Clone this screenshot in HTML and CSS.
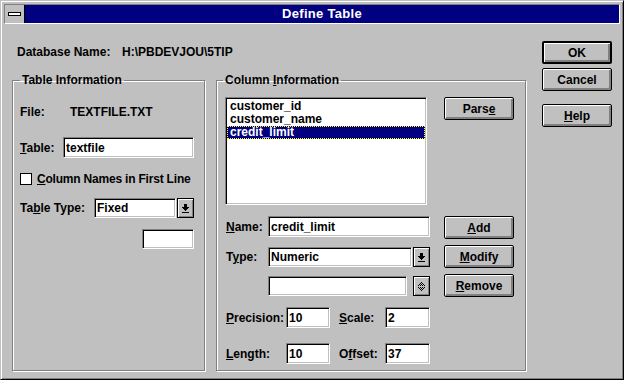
FILE: index.html
```html
<!DOCTYPE html>
<html lang="en">
<head>
    <meta charset="UTF-8">
    <meta name="viewport" content="width=device-width, initial-scale=1.0">
    <title>Define Table</title>
    <link rel="stylesheet" href="styles.css">
</head>
<body>
    <div class="window">
        <div class="caption">
            <div class="sysmenu"><span class="sysbar"></span></div>
            <div class="title">Define Table</div>
        </div>
        <div class="client">
            <div class="main">
                <div class="dbname">
                    <span class="dblabel">Database Name:</span>
                    <span>H:\PBDEVJOU\5TIP</span>
                </div>
                <div class="groups">
                    <fieldset class="group group-table">
                        <legend>Table Information</legend>
                        <div class="row row-file">
                            <span class="lbl-file">File:</span>
                            <span>TEXTFILE.TXT</span>
                        </div>
                        <div class="row row-table">
                            <span class="lbl-table"><u>T</u>able:</span>
                            <input class="edit edit-table" type="text" value="textfile">
                        </div>
                        <div class="row row-check">
                            <span class="checkbox"></span>
                            <span class="checklbl"><u>C</u>olumn Names in First Line</span>
                        </div>
                        <div class="row row-type">
                            <span class="lbl-ttype">Ta<u>b</u>le Type:</span>
                            <div class="combo combo-ttype">
                                <input class="edit" type="text" value="Fixed">
                                <div class="dropbtn">
                                    <svg width="7" height="9" viewBox="0 0 7 9" shape-rendering="crispEdges"><path d="M2 0H5V3H7V4H6V5H5V6H4V7H3V6H2V5H1V4H0V3H2Z M0 8H7V9H0Z"/></svg>
                                </div>
                            </div>
                        </div>
                        <div class="row row-blank">
                            <input class="edit edit-small" type="text" value="">
                        </div>
                    </fieldset>

                    <fieldset class="group group-col">
                        <legend>Column <u>I</u>nformation</legend>
                        <div class="colbody">
                            <div class="colfields">
                                <ul class="listbox">
                                    <li>customer_id</li>
                                    <li>customer_name</li>
                                    <li class="sel">credit_limit</li>
                                </ul>
                                <div class="frow frow-name">
                                    <span class="flbl"><u>N</u>ame:</span>
                                    <input class="edit edit-name" type="text" value="credit_limit">
                                </div>
                                <div class="frow frow-type">
                                    <span class="flbl">T<u>y</u>pe:</span>
                                    <div class="combo combo-ctype">
                                        <input class="edit" type="text" value="Numeric">
                                        <div class="dropbtn">
                                            <svg width="7" height="9" viewBox="0 0 7 9" shape-rendering="crispEdges"><path d="M2 0H5V3H7V4H6V5H5V6H4V7H3V6H2V5H1V4H0V3H2Z M0 8H7V9H0Z"/></svg>
                                        </div>
                                    </div>
                                </div>
                                <div class="frow frow-extra">
                                    <span class="flbl"></span>
                                    <input class="edit edit-extra" type="text" value="">
                                    <div class="spinbtn">
                                        <svg width="7" height="11" viewBox="0 0 7 11" shape-rendering="crispEdges">
                                            <defs>
                                                <pattern id="dots" width="2" height="2" patternUnits="userSpaceOnUse">
                                                    <rect width="1" height="1" fill="#000"/>
                                                    <rect x="1" y="1" width="1" height="1" fill="#000"/>
                                                </pattern>
                                            </defs>
                                            <path fill="url(#dots)" d="M3 0H4V1H5V2H6V3H7V5H0V3H1V2H2V1H3Z M0 6H7V8H6V9H5V10H4V11H3V10H2V9H1V8H0Z"/>
                                        </svg>
                                    </div>
                                </div>
                                <div class="frow frow-prec">
                                    <span class="plbl"><u>P</u>recision:</span>
                                    <input class="edit edit-num" type="text" value="10">
                                    <span class="slbl"><u>S</u>cale:</span>
                                    <input class="edit edit-num2" type="text" value="2">
                                </div>
                                <div class="frow frow-len">
                                    <span class="plbl"><u>L</u>ength:</span>
                                    <input class="edit edit-num" type="text" value="10">
                                    <span class="slbl">O<u>f</u>fset:</span>
                                    <input class="edit edit-num2" type="text" value="37">
                                </div>
                            </div>
                            <div class="colbtns">
                                <button class="btn">Pars<u>e</u></button>
                                <button class="btn btn-add"><u>A</u>dd</button>
                                <button class="btn btn-mod"><u>M</u>odify</button>
                                <button class="btn btn-mod"><u>R</u>emove</button>
                            </div>
                        </div>
                    </fieldset>
                </div>
            </div>
            <div class="side">
                <button class="btn btn-default">OK</button>
                <button class="btn btn-cancel">Cancel</button>
                <button class="btn btn-help"><u>H</u>elp</button>
            </div>
        </div>
    </div>
</body>
</html>
```

FILE: styles.css
```css
* {
    box-sizing: border-box;
}
body {
    margin: 0;
    font-family: "Liberation Sans", Arial, sans-serif;
    font-size: 12px;
    font-weight: bold;
    color: #000;
    background: #c0c0c0;
}
u {
    text-underline-offset: 1px;
}
.window {
    width: 624px;
    height: 380px;
    background: #c0c0c0;
    border: 1px solid;
    border-color: #c0c0c0 #000 #000 #c0c0c0;
    box-shadow: inset 1px 1px #fff, inset -1px -1px #808080;
    padding: 3px;
    display: flex;
    flex-direction: column;
}
.caption {
    display: flex;
    height: 20px;
    border: 1px solid;
    border-color: #808080 #fff #fff #808080;
}
.sysmenu {
    width: 20px;
    background: #c0c0c0;
    border-right: 1px solid #000;
    display: flex;
    align-items: center;
    justify-content: center;
}
.sysbar {
    width: 13px;
    height: 4px;
    background: #fff;
    border: 1px solid #000;
}
.title {
    flex: 1;
    background: #000080;
    color: #fff;
    text-align: center;
    font-size: 13px;
    letter-spacing: 0.3px;
    line-height: 18px;
}
.client {
    flex: 1;
    display: flex;
    padding: 17px 0 0 8px;
}
.dbname {
    display: flex;
    margin-top: 4px;
    padding-left: 5px;
    line-height: 14px;
}
.dblabel {
    width: 105px;
}
.groups {
    display: flex;
    gap: 11px;
    margin-top: 14px;
}
.group {
    margin: 0;
    min-width: 0;
    height: 298px;
    border: 1px solid #808080;
    box-shadow: inset 1px 1px #fff, 1px 1px #fff;
}
.group legend {
    padding: 0 2px;
    line-height: 15px;
}
.group-table {
    width: 193px;
    padding: 14px 10px 0 7px;
}
.row {
    display: flex;
    align-items: center;
    white-space: nowrap;
}
.row-file {
    height: 20px;
}
.lbl-file {
    width: 50px;
}
.row-table {
    height: 21px;
    margin-top: 15px;
}
.lbl-table {
    width: 43px;
}
.edit {
    margin: 0;
    padding: 0 0 0 2px;
    font: inherit;
    color: #000;
    background: #fff;
    border: 1px solid;
    border-color: #808080 #fff #fff #808080;
    box-shadow: inset 1px 1px #000, inset -1px -1px #c0c0c0;
    border-radius: 0;
    outline: none;
}
.edit-table {
    width: 131px;
    height: 21px;
}
.row-check {
    height: 20px;
    margin-top: 11px;
}
.checkbox {
    flex: none;
    width: 12px;
    height: 12px;
    margin-right: 5px;
    background: #fff;
    border: 1px solid #000;
}
.checklbl {
    letter-spacing: -0.2px;
}
.row-type {
    height: 20px;
    margin-top: 9px;
}
.lbl-ttype {
    width: 74px;
}
.combo {
    display: flex;
    gap: 1px;
    height: 20px;
}
.combo .edit {
    height: 20px;
}
.combo-ttype {
    width: 100px;
}
.combo-ttype .edit {
    width: 82px;
}
.dropbtn, .spinbtn {
    width: 17px;
    height: 20px;
    background: #c0c0c0;
    border: 1px solid #000;
    box-shadow: inset 1px 1px #fff, inset -1px -1px #808080;
    display: flex;
    align-items: center;
    justify-content: center;
}
.row-blank {
    height: 20px;
    margin-top: 11px;
    justify-content: flex-end;
}
.edit-small {
    width: 52px;
    height: 20px;
}
.group-col {
    width: 310px;
    padding: 9px 11px 0 8px;
}
.group-col legend {
    margin-left: -2px;
}
.colbody {
    display: flex;
    gap: 14px;
}
.colfields {
    width: 205px;
}
.listbox {
    width: 202px;
    height: 108px;
    margin: 0;
    padding: 2px 1px;
    list-style: none;
    background: #fff;
    border: 1px solid;
    border-color: #808080 #fff #fff #808080;
    box-shadow: inset 1px 1px #000, inset -1px -1px #c0c0c0;
}
.listbox li {
    padding-left: 3px;
    line-height: 13px;
}
.listbox .sel {
    background: #000080;
    color: #fff;
    outline: 1px dotted #ff0;
    outline-offset: -1px;
}
.frow {
    display: flex;
    align-items: center;
    white-space: nowrap;
}
.flbl {
    width: 43px;
    padding-left: 1px;
}
.frow-name {
    height: 21px;
    margin-top: 11px;
}
.edit-name {
    width: 162px;
    height: 21px;
}
.frow-type {
    height: 20px;
    margin-top: 10px;
}
.combo-ctype {
    width: 162px;
}
.combo-ctype .edit {
    width: 144px;
}
.frow-extra {
    height: 20px;
    margin-top: 9px;
}
.edit-extra {
    width: 139px;
    height: 20px;
}
.spinbtn {
    margin-left: auto;
}
.frow-prec {
    height: 21px;
    margin-top: 11px;
}
.frow-len {
    height: 21px;
    margin-top: 15px;
}
.plbl {
    width: 61px;
    padding-left: 1px;
}
.slbl {
    width: 46px;
    margin-left: 9px;
}
.edit-num {
    width: 44px;
    height: 21px;
}
.edit-num2 {
    width: 45px;
    height: 21px;
}
.colbtns {
    width: 70px;
    display: flex;
    flex-direction: column;
}
.btn {
    width: 70px;
    height: 23px;
    margin: 0;
    padding: 0;
    font: inherit;
    color: #000;
    background: #c0c0c0;
    border: 1px solid #000;
    border-radius: 2px;
    box-shadow: inset 1px 1px #fff, inset -1px -1px #808080, inset -2px -2px #808080;
    display: flex;
    align-items: center;
    justify-content: center;
}
.btn-add {
    margin-top: 96px;
}
.btn-mod {
    margin-top: 6px;
}
.side {
    width: 70px;
    margin-left: 16px;
    display: flex;
    flex-direction: column;
}
.btn-default {
    border-width: 2px;
}
.btn-cancel {
    margin-top: 4px;
}
.btn-help {
    margin-top: 13px;
}
```
